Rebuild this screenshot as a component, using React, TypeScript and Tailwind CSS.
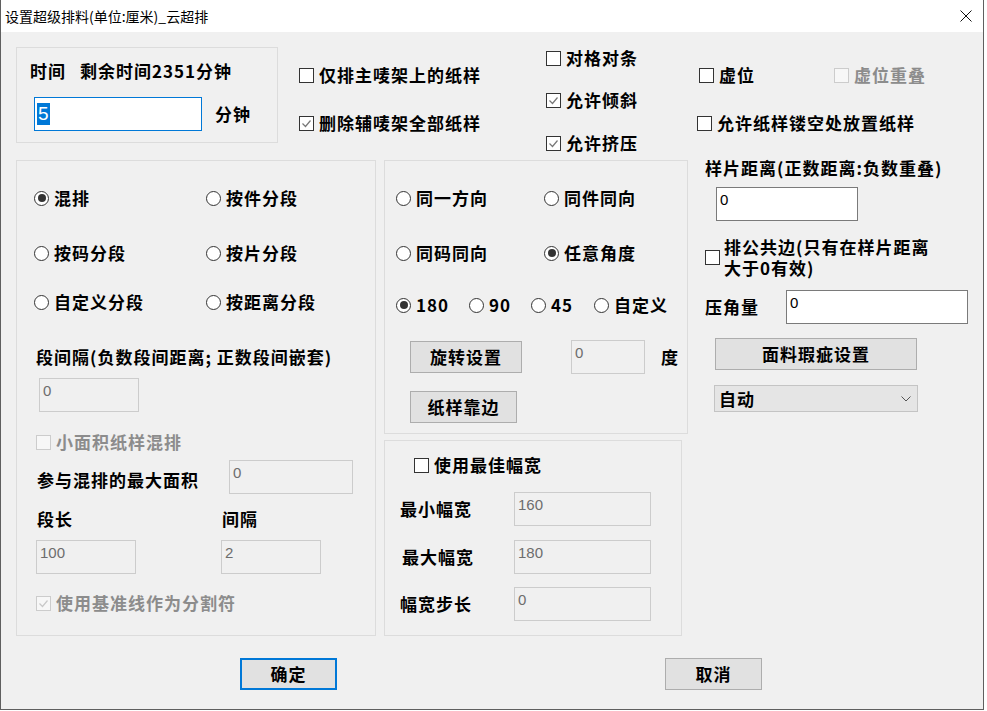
import React from "react";

const FONT = "font-['Noto_Sans_CJK_SC',sans-serif]";
const LABEL = `${FONT} text-[17px] leading-5 tracking-[1px] font-bold whitespace-nowrap`;

function Box({ checked, disabled }: { checked?: boolean; disabled?: boolean }) {
  return (
    <span
      className={`flex-none w-[15px] h-[15px] border flex items-center justify-center ${
        disabled ? "border-[#cccccc] bg-[#f7f7f7]" : "border-[#333333] bg-white"
      }`}
    >
      {checked && (
        <svg width="11" height="11" viewBox="0 0 11 11">
          <polyline
            points="1.5,5.5 4.5,8.5 9.5,2.5"
            fill="none"
            stroke={disabled ? "#c8c8c8" : "#777777"}
            strokeWidth="1.2"
          />
        </svg>
      )}
    </span>
  );
}

function Check({
  label,
  checked,
  disabled,
  className = "",
}: {
  label: string;
  checked?: boolean;
  disabled?: boolean;
  className?: string;
}) {
  return (
    <div className={`flex items-center h-5 ${className}`}>
      <Box checked={checked} disabled={disabled} />
      <span className={`${LABEL} ml-[5px] ${disabled ? "text-[#8c8c8c]" : "text-black"}`}>{label}</span>
    </div>
  );
}

function Radio({ label, checked, className = "" }: { label: string; checked?: boolean; className?: string }) {
  return (
    <div className={`flex items-center h-5 flex-none ${className}`}>
      <span className="flex-none w-[15px] h-[15px] rounded-full border border-[#333333] bg-white flex items-center justify-center">
        {checked && <span className="w-[8px] h-[8px] rounded-full bg-[#333333]" />}
      </span>
      <span className={`${LABEL} ml-[5px] text-black`}>{label}</span>
    </div>
  );
}

function TextBox({
  value,
  disabled,
  className = "",
}: {
  value: string;
  disabled?: boolean;
  className?: string;
}) {
  return (
    <div
      className={`flex-none border pl-[3px] pt-[3px] font-['Liberation_Sans',sans-serif] text-[15px] leading-[18px] ${
        disabled ? "bg-[#f0f0f0] border-[#cccccc] text-[#6d6d6d]" : "bg-white border-[#7a7a7a] text-black"
      } ${className}`}
    >
      {value}
    </div>
  );
}

function Btn({ label, primary, className = "" }: { label: string; primary?: boolean; className?: string }) {
  return (
    <div
      className={`flex-none bg-[#e1e1e1] flex items-center justify-center ${LABEL} text-black ${
        primary ? "border-2 border-[#0078d7]" : "border border-[#adadad]"
      } ${className}`}
    >
      {label}
    </div>
  );
}

function Group({ className = "", children }: { className?: string; children: React.ReactNode }) {
  return <div className={`flex-none border border-[#dcdcdc] flex flex-col ${className}`}>{children}</div>;
}

export default function App() {
  return (
    <div className="w-[984px] h-[710px] bg-[#f0f0f0] border-l border-r border-b border-[#5f5f5f] flex flex-col overflow-hidden">
      {/* title bar */}
      <div className="h-[32px] bg-white flex items-center justify-between flex-none">
        <span className={`${FONT} text-[14px] text-black pl-[4px]`}>设置超级排料(单位:厘米)_云超排</span>
        <svg width="12" height="12" viewBox="0 0 12 12" className="mr-[11px]">
          <path d="M0.5 0.5 L11.5 11.5 M11.5 0.5 L0.5 11.5" stroke="#111" strokeWidth="1" />
        </svg>
      </div>

      {/* top row */}
      <div className="flex h-[126px] pl-[15px] flex-none">
        <Group className="mt-[15px] w-[262px] h-[96px]">
          <div className={`${LABEL} mt-[13px] ml-[13px] text-black`}>
            时间<span className="ml-[14px]">剩余时间2351分钟</span>
          </div>
          <div className="mt-[16px] ml-[17px] flex items-center">
            <div className="w-[168px] h-[34px] border border-[#0078d7] bg-white pl-[2px] pt-[4px]">
              <span className="bg-[#0078d7] text-white font-['Liberation_Sans',sans-serif] text-[19px] leading-[22px] px-[1px] inline-block">
                5
              </span>
            </div>
            <span className={`${LABEL} ml-[13px] text-black`}>分钟</span>
          </div>
        </Group>
        <div className="ml-[21px] w-[247px] flex-none flex flex-col">
          <Check className="mt-[33px]" label="仅排主唛架上的纸样" />
          <Check className="mt-[28px]" label="删除辅唛架全部纸样" checked />
        </div>
        <div className="w-[151px] flex-none flex flex-col">
          <Check className="mt-[16px]" label="对格对条" />
          <Check className="mt-[22px]" label="允许倾斜" checked />
          <Check className="mt-[23px]" label="允许挤压" checked />
        </div>
        <div className="flex flex-col">
          <div className="mt-[33px] ml-[2px] flex">
            <Check className="w-[135px]" label="虚位" />
            <Check label="虚位重叠" disabled />
          </div>
          <Check className="mt-[28px]" label="允许纸样镂空处放置纸样" />
        </div>
      </div>

      {/* main row */}
      <div className="flex pl-[15px] flex-none">
        <Group className="mt-[2px] w-[360px] h-[476px]">
          <div className="mt-[27px] ml-[17px] flex">
            <Radio className="w-[172px]" label="混排" checked />
            <Radio label="按件分段" />
          </div>
          <div className="mt-[35px] ml-[17px] flex">
            <Radio className="w-[172px]" label="按码分段" />
            <Radio label="按片分段" />
          </div>
          <div className="mt-[29px] ml-[17px] flex">
            <Radio className="w-[172px]" label="自定义分段" />
            <Radio label="按距离分段" />
          </div>
          <div className={`${LABEL} tracking-[0px] mt-[35px] ml-[19px] text-black`}>
            段间隔(负数段间距离; 正数段间嵌套)
          </div>
          <TextBox className="mt-[11px] ml-[22px] w-[100px] h-[34px]" value="0" disabled />
          <Check className="mt-[20px] ml-[19px]" label="小面积纸样混排" disabled />
          <div className="mt-[8px] ml-[20px] flex">
            <span className={`${LABEL} mt-[10px] w-[192px] text-black`}>参与混排的最大面积</span>
            <TextBox className="w-[124px] h-[34px]" value="0" disabled />
          </div>
          <div className="mt-[15px] ml-[20px] flex">
            <span className={`${LABEL} w-[185px] text-black`}>段长</span>
            <span className={`${LABEL} text-black`}>间隔</span>
          </div>
          <div className="mt-[11px] ml-[19px] flex">
            <TextBox className="w-[100px] h-[34px]" value="100" disabled />
            <TextBox className="ml-[85px] w-[100px] h-[34px]" value="2" disabled />
          </div>
          <Check className="mt-[19px] ml-[19px]" label="使用基准线作为分割符" checked disabled />
        </Group>

        <div className="ml-[8px] w-[304px] flex-none flex flex-col">
          <Group className="mt-[2px] h-[274px]">
            <div className="mt-[27px] ml-[11px] flex">
              <Radio className="w-[148px]" label="同一方向" />
              <Radio label="同件同向" />
            </div>
            <div className="mt-[35px] ml-[11px] flex">
              <Radio className="w-[148px]" label="同码同向" />
              <Radio label="任意角度" checked />
            </div>
            <div className="mt-[32px] ml-[11px] flex">
              <Radio className="w-[73px]" label="180" checked />
              <Radio className="w-[62px]" label="90" />
              <Radio className="w-[63px]" label="45" />
              <Radio label="自定义" />
            </div>
            <div className="mt-[25px] ml-[25px] flex items-start">
              <Btn className="mt-[1px] w-[112px] h-[32px]" label="旋转设置" />
              <TextBox className="ml-[49px] w-[74px] h-[34px]" value="0" disabled />
              <span className={`${LABEL} ml-[16px] mt-[7px] text-black`}>度</span>
            </div>
            <Btn className="mt-[17px] ml-[25px] w-[107px] h-[32px]" label="纸样靠边" />
          </Group>
          <Group className="mt-[6px] w-[298px] h-[196px]">
            <Check className="mt-[14px] ml-[29px]" label="使用最佳幅宽" />
            <div className="mt-[17px] ml-[15px] flex items-center">
              <span className={`${LABEL} w-[114px] text-black`}>最小幅宽</span>
              <TextBox className="w-[137px] h-[34px]" value="160" disabled />
            </div>
            <div className="mt-[14px] ml-[15px] flex items-center">
              <span className={`${LABEL} w-[114px] pl-[2px] text-black`}>最大幅宽</span>
              <TextBox className="w-[137px] h-[34px]" value="180" disabled />
            </div>
            <div className="mt-[13px] ml-[15px] flex items-center">
              <span className={`${LABEL} w-[114px] text-black`}>幅宽步长</span>
              <TextBox className="w-[137px] h-[34px]" value="0" disabled />
            </div>
          </Group>
        </div>

        <div className="ml-[9px] flex flex-col">
          <span className={`${LABEL} tracking-[0.5px] ml-[8px] text-black`}>样片距离(正数距离:负数重叠)</span>
          <TextBox className="mt-[9px] ml-[19px] w-[142px] h-[34px]" value="0" />
          <div className="mt-[15px] ml-[8px] flex items-center">
            <Box />
            <div className="ml-[4px] flex flex-col">
              <span className={`${LABEL} h-[21px] leading-[21px] text-black`}>排公共边(只有在样片距离</span>
              <span className={`${LABEL} h-[21px] leading-[21px] text-black`}>大于0有效)</span>
            </div>
          </div>
          <div className="mt-[12px] ml-[8px] flex items-center">
            <span className={`${LABEL} w-[81px] text-black`}>压角量</span>
            <TextBox className="w-[182px] h-[34px]" value="0" />
          </div>
          <Btn className="mt-[14px] ml-[18px] w-[202px] h-[32px]" label="面料瑕疵设置" />
          <div className="mt-[15px] ml-[17px] w-[204px] h-[27px] bg-[#e5e5e5] border border-[#c4c4c4] flex items-center justify-between pl-[4px] pr-[6px]">
            <span className={`${LABEL} text-black`}>自动</span>
            <svg width="10" height="6" viewBox="0 0 10 6">
              <polyline points="0.5,0.5 5,5 9.5,0.5" fill="none" stroke="#555" strokeWidth="1" />
            </svg>
          </div>
        </div>
      </div>

      {/* buttons */}
      <div className="mt-[22px] pl-[239px] flex">
        <Btn className="w-[97px] h-[32px]" label="确定" primary />
        <Btn className="ml-[328px] w-[97px] h-[32px]" label="取消" />
      </div>
    </div>
  );
}
